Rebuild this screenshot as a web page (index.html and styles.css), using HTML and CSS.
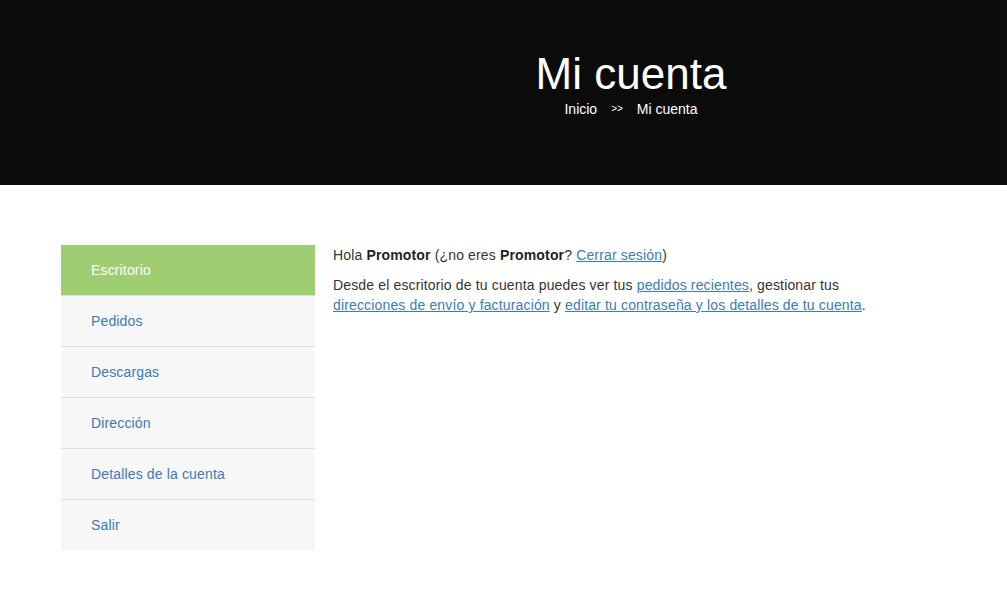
FILE: index.html
```html
<!DOCTYPE html>
<html lang="es">
<head>
<meta charset="utf-8">
<title>Mi cuenta</title>
<link rel="stylesheet" href="styles.css">
</head>
<body>
<header class="hero">
  <div class="hero-inner">
    <h1 class="hero-title">Mi cuenta</h1>
    <nav class="crumbs">
      <a href="#" class="crumb">Inicio</a>
      <span class="crumb-sep">&gt;&gt;</span>
      <span class="crumb">Mi cuenta</span>
    </nav>
  </div>
</header>
<main class="account">
  <nav class="side">
    <a href="#" class="side-item active">Escritorio</a>
    <a href="#" class="side-item">Pedidos</a>
    <a href="#" class="side-item">Descargas</a>
    <a href="#" class="side-item">Dirección</a>
    <a href="#" class="side-item">Detalles de la cuenta</a>
    <a href="#" class="side-item">Salir</a>
  </nav>
  <section class="content">
    <p class="p1">Hola <strong>Promotor</strong> (¿no eres <strong>Promotor</strong>? <a href="#">Cerrar sesión</a>)</p>
    <p class="p2">Desde el escritorio de tu cuenta puedes ver tus <a href="#">pedidos recientes</a>, gestionar tus <a href="#">direcciones de envío y facturación</a> y <a href="#">editar tu contraseña y los detalles de tu cuenta</a>.</p>
  </section>
</main>
</body>
</html>
```
FILE: styles.css
```css
* { box-sizing: border-box; }
html, body { margin: 0; padding: 0; background: #fff; }
body { font-family: "Liberation Sans", Arial, sans-serif; color: #333; font-size: 14px; }

.hero {
  background: #0b0b0b;
  height: 185px;
  padding-left: 255px;
  padding-top: 48px;
}
.hero-inner { text-align: center; color: #fff; }
.hero-title {
  margin: 0;
  font-weight: normal;
  font-size: 44px;
  line-height: 52px;
  color: #fff;
}
.crumbs {
  display: flex;
  justify-content: center;
  align-items: center;
  gap: 14px;
  margin-top: 0;
  font-size: 14px;
  line-height: 18px;
}
.crumb { color: #fff; text-decoration: none; }
.crumb-sep { font-size: 10px; color: #fff; }

.account {
  display: flex;
  align-items: flex-start;
  padding: 60px 0 0 61px;
}
.side {
  width: 254px;
  flex: none;
  display: flex;
  flex-direction: column;
  background: #f7f7f7;
}
.side-item {
  display: block;
  height: 51px;
  line-height: 50px;
  padding-left: 30px;
  color: #3d7ab8;
  text-decoration: none;
  border-bottom: 1px solid #dedede;
  letter-spacing: 0.15px;
}
.side-item:last-child { border-bottom: none; height: 50px; }
.side-item.active { background: #9fce72; color: #fff; }

.content {
  margin-left: 18px;
  width: 560px;
  line-height: 20px;
  letter-spacing: 0.15px;
}
.content p { margin: 0; }
.content .p1 { margin-top: 0; }
.content .p2 { margin-top: 10px; }
.content a { color: #3d7ab8; text-decoration: underline; }
.content strong { color: #222; }
```
